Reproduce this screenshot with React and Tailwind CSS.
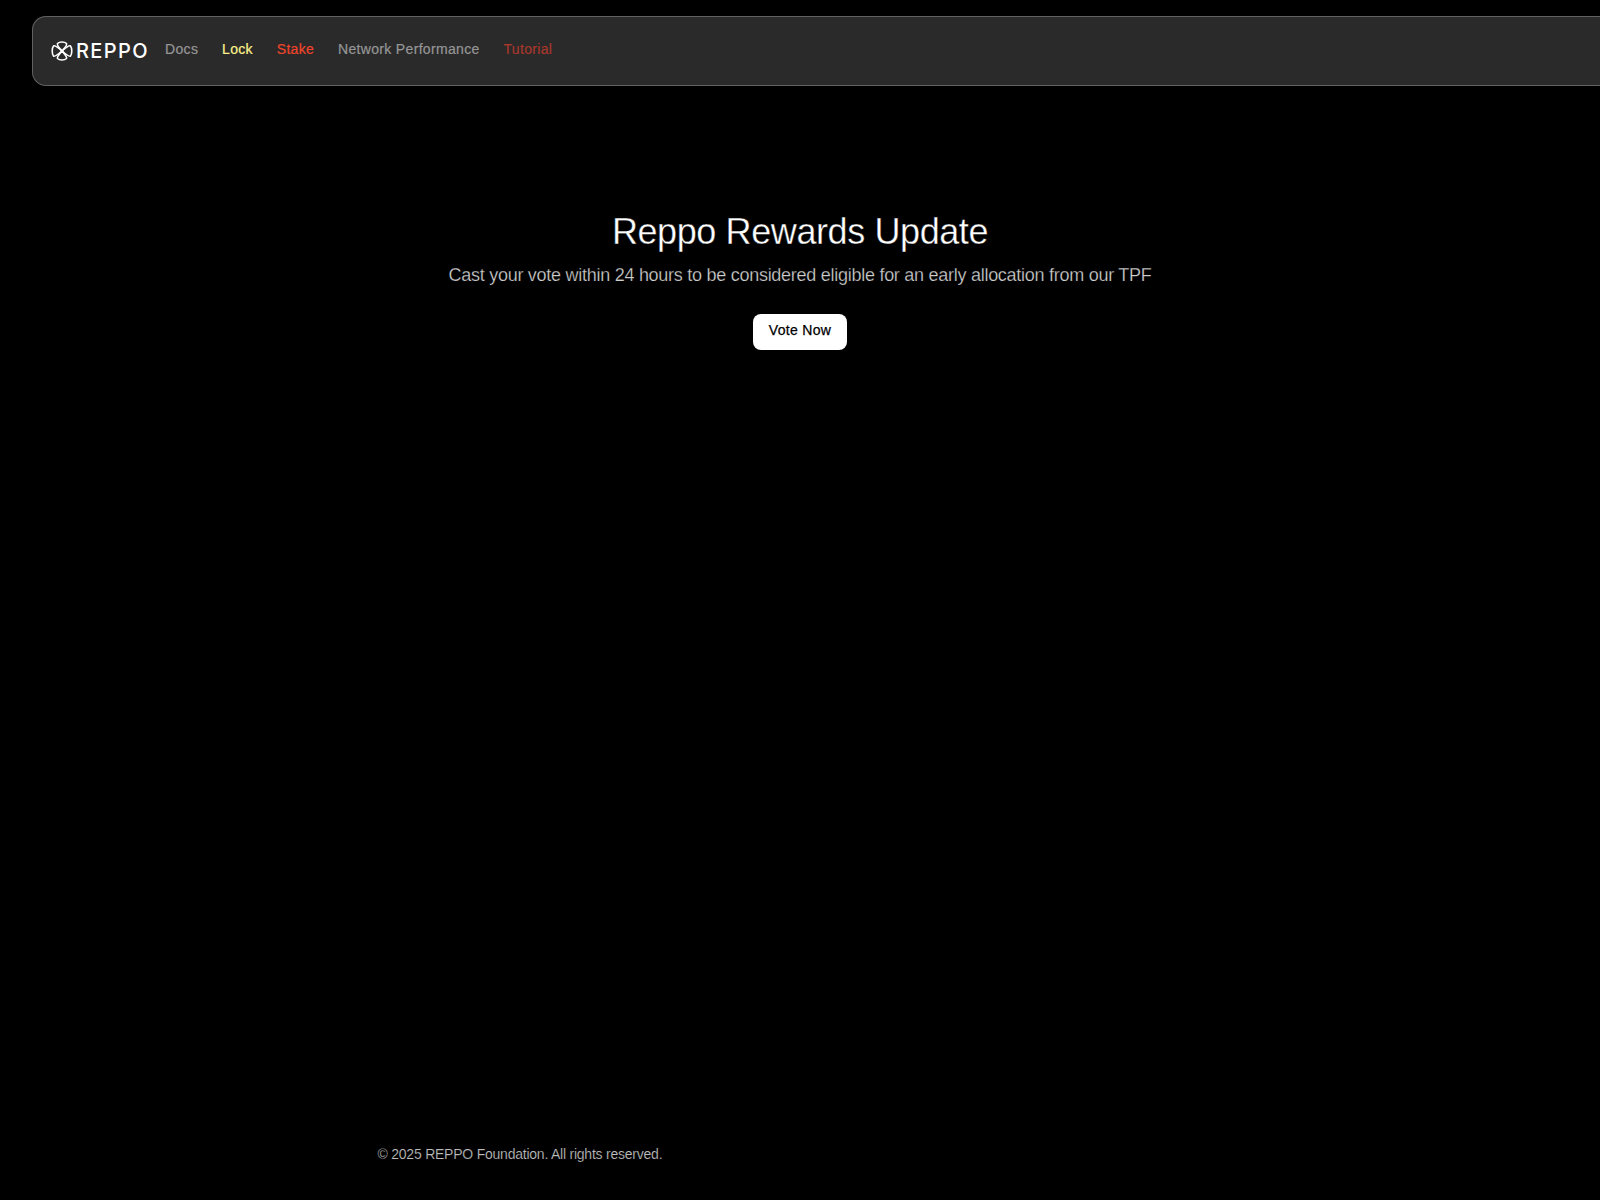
import React from 'react';

const Logo = () => (
  <div className="flex items-center gap-[3px]">
    <svg width="22" height="20" viewBox="0 0 22 20" fill="none" stroke="white" strokeWidth="1.6" strokeLinecap="round">
      <path d="M6.500 2.500 C8.500 0.500 13.500 0.500 15.500 2.500 C16.500 4 13.500 7 11 10 C8.500 13 5.500 16 6.500 17.500 C8.500 19.500 13.500 19.500 15.500 17.500 C16.500 16 13.500 13 11 10 C8.500 7 5.500 4 6.500 2.500 Z" />
      <path d="M2.500 5 C0.800 7 0.800 13 2.500 15 C4 16 7.500 13 11 10 C14.500 7 18 4 19.500 5 C21.200 7 21.200 13 19.500 15 C18 16 14.500 13 11 10 C7.500 7 4 4 2.500 5 Z" />
    </svg>
    <span className="font-['Inter',sans-serif] text-[20px] leading-none font-medium tracking-[1.4px] text-white">REPPO</span>
  </div>
);

const links = [
  { label: 'Docs', color: 'text-[#969696]' },
  { label: 'Lock', color: 'text-[#fdf28c]' },
  { label: 'Stake', color: 'text-[#f0452a]' },
  { label: 'Network Performance', color: 'text-[#969696]' },
  { label: 'Tutorial', color: 'text-[#a8382a]' },
];

export default function App() {
  return (
    <div className="flex min-h-[1200px] flex-col overflow-hidden bg-black font-['Liberation_Sans',sans-serif]">
      <div className="pt-4 pl-8">
        <nav className="flex h-[70px] w-full items-center gap-4 rounded-l-[14px] border border-r-0 border-[#626262] bg-[#2a2a2a] pl-[18px]">
          <Logo />
          <div className="flex items-center gap-[23.8px] pb-1">
            {links.map((link) => (
              <a key={link.label} className={`text-sm tracking-[0.33px] [-webkit-text-stroke:0.2px] ${link.color}`}>{link.label}</a>
            ))}
          </div>
        </nav>
      </div>
      <main className="flex flex-1 flex-col items-center pt-[126px]">
        <h1 className="text-4xl tracking-[-0.4px] text-white [-webkit-text-stroke:0.35px_black]">Reppo Rewards Update</h1>
        <p className="mt-[9px] text-lg tracking-[-0.27px] text-[#cfcfcf] [-webkit-text-stroke:0.25px_black]">Cast your vote within 24 hours to be considered eligible for an early allocation from our TPF</p>
        <button className="mt-[25px] h-9 w-[94px] rounded-lg bg-white pb-[5px] text-sm tracking-[0.3px] text-black [-webkit-text-stroke:0.25px]">Vote Now</button>
      </main>
      <footer className="pb-[36px] pl-[377.500px] text-sm tracking-[-0.23px] text-[#bcbcbc] [-webkit-text-stroke:0.15px_black]">© 2025 REPPO Foundation. All rights reserved.</footer>
    </div>
  );
}
